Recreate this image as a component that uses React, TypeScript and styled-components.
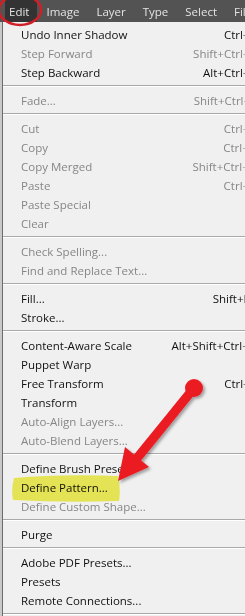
import styled, { createGlobalStyle } from "styled-components";

type Item = {
  label: string;
  keys?: string;
  off?: boolean;
  sub?: boolean;
};

const groups: Item[][] = [
  [
    { label: "Undo Inner Shadow", keys: "Ctrl+Z" },
    { label: "Step Forward", keys: "Shift+Ctrl+Z", off: true },
    { label: "Step Backward", keys: "Alt+Ctrl+Z" },
  ],
  [{ label: "Fade...", keys: "Shift+Ctrl+F", off: true }],
  [
    { label: "Cut", keys: "Ctrl+X", off: true },
    { label: "Copy", keys: "Ctrl+C", off: true },
    { label: "Copy Merged", keys: "Shift+Ctrl+C", off: true },
    { label: "Paste", keys: "Ctrl+V", off: true },
    { label: "Paste Special", off: true, sub: true },
    { label: "Clear", off: true },
  ],
  [
    { label: "Check Spelling...", off: true },
    { label: "Find and Replace Text...", off: true },
  ],
  [
    { label: "Fill...", keys: "Shift+F5" },
    { label: "Stroke..." },
  ],
  [
    { label: "Content-Aware Scale", keys: "Alt+Shift+Ctrl+C" },
    { label: "Puppet Warp" },
    { label: "Free Transform", keys: "Ctrl+T" },
    { label: "Transform", sub: true },
    { label: "Auto-Align Layers...", off: true },
    { label: "Auto-Blend Layers...", off: true },
  ],
  [
    { label: "Define Brush Preset..." },
    { label: "Define Pattern..." },
    { label: "Define Custom Shape...", off: true },
  ],
  [{ label: "Purge", sub: true }],
  [
    { label: "Adobe PDF Presets..." },
    { label: "Presets", sub: true },
    { label: "Remote Connections..." },
  ],
];

const menus = ["Edit", "Image", "Layer", "Type", "Select", "Filter"];

const GlobalStyle = createGlobalStyle`
  html, body {
    margin: 0;
    padding: 0;
    background: #c9c9c9;
  }
`;

const Screen = styled.div`
  position: relative;
  width: 245px;
  height: 616px;
  overflow: hidden;
  font-family: "Open Sans", "Noto Sans", sans-serif;
  font-size: 11.5px;
  background: #c9c9c9;
`;

const MenuBar = styled.div`
  display: flex;
  height: 22px;
  padding-left: 5px;
  background: #535353;
  white-space: nowrap;
`;

const MenuTitle = styled.div<{ $open?: boolean }>`
  display: flex;
  align-items: center;
  padding: 0 8px 0 4px;
  margin-right: 5px;
  color: #e4e4e4;
  font-size: 11.5px;
  background: ${({ $open }) => ($open ? "#333333" : "transparent")};
`;

const Dropdown = styled.div`
  width: 262px;
  margin-left: 2px;
  padding-top: 3px;
  background: #f0f0f0;
  border-left: 1px solid #6b6b6b;
`;

const Row = styled.div<{ $off?: boolean }>`
  display: flex;
  justify-content: space-between;
  align-items: center;
  height: 19px;
  padding: 0 9px 0 18px;
  color: ${({ $off }) => ($off ? "#868686" : "#111111")};
  white-space: nowrap;
`;

const Keys = styled.span`
  text-align: right;
`;

const Separator = styled.div`
  height: 9px;
  box-sizing: border-box;
  padding-top: 3px;

  &::after {
    content: "";
    display: block;
    height: 1px;
    background: #a9a9a9;
    border-bottom: 1px solid #ffffff;
  }
`;

const Overlay = styled.svg`
  position: absolute;
  left: 0;
  top: 0;
  pointer-events: none;
`;

const Marker = styled.path`
  mix-blend-mode: multiply;
`;

export default function App() {
  return (
    <>
      <GlobalStyle />
      <Screen>
        <MenuBar>
          {menus.map((m, i) => (
            <MenuTitle key={m} $open={i === 0}>
              {m}
            </MenuTitle>
          ))}
        </MenuBar>
        <Dropdown>
          {groups.map((g, gi) => (
            <div key={gi}>
              {g.map((it) => (
                <Row key={it.label} $off={it.off}>
                  <span>{it.label}</span>
                  <Keys>{it.keys ?? (it.sub ? "▸" : "")}</Keys>
                </Row>
              ))}
              <Separator />
            </div>
          ))}
        </Dropdown>

        <Overlay width="245" height="616" viewBox="0 0 245 616">
          <defs>
            <filter id="shade" x="-20%" y="-20%" width="140%" height="140%">
              <feDropShadow dx="2" dy="2" stdDeviation="1.5" floodColor="#000" floodOpacity="0.35" />
            </filter>
          </defs>
          <Marker
            d="M14 478 Q60 474 118 476 Q121 488 119 501 Q66 503 13 500 Q11 489 14 478 Z"
            fill="#f3f25a"
          />
          <ellipse cx="20" cy="10" rx="21" ry="15" fill="none" stroke="#d01f26" strokeWidth="2.5" />
          <g filter="url(#shade)" fill="#ea1c24">
            <circle cx="194" cy="388" r="9" />
            <polygon points="190.5,385 197.5,391 139.5,462.5 132.5,456.5" />
            <polygon points="118,481 125,447 149,467" />
          </g>
        </Overlay>
      </Screen>
    </>
  );
}
